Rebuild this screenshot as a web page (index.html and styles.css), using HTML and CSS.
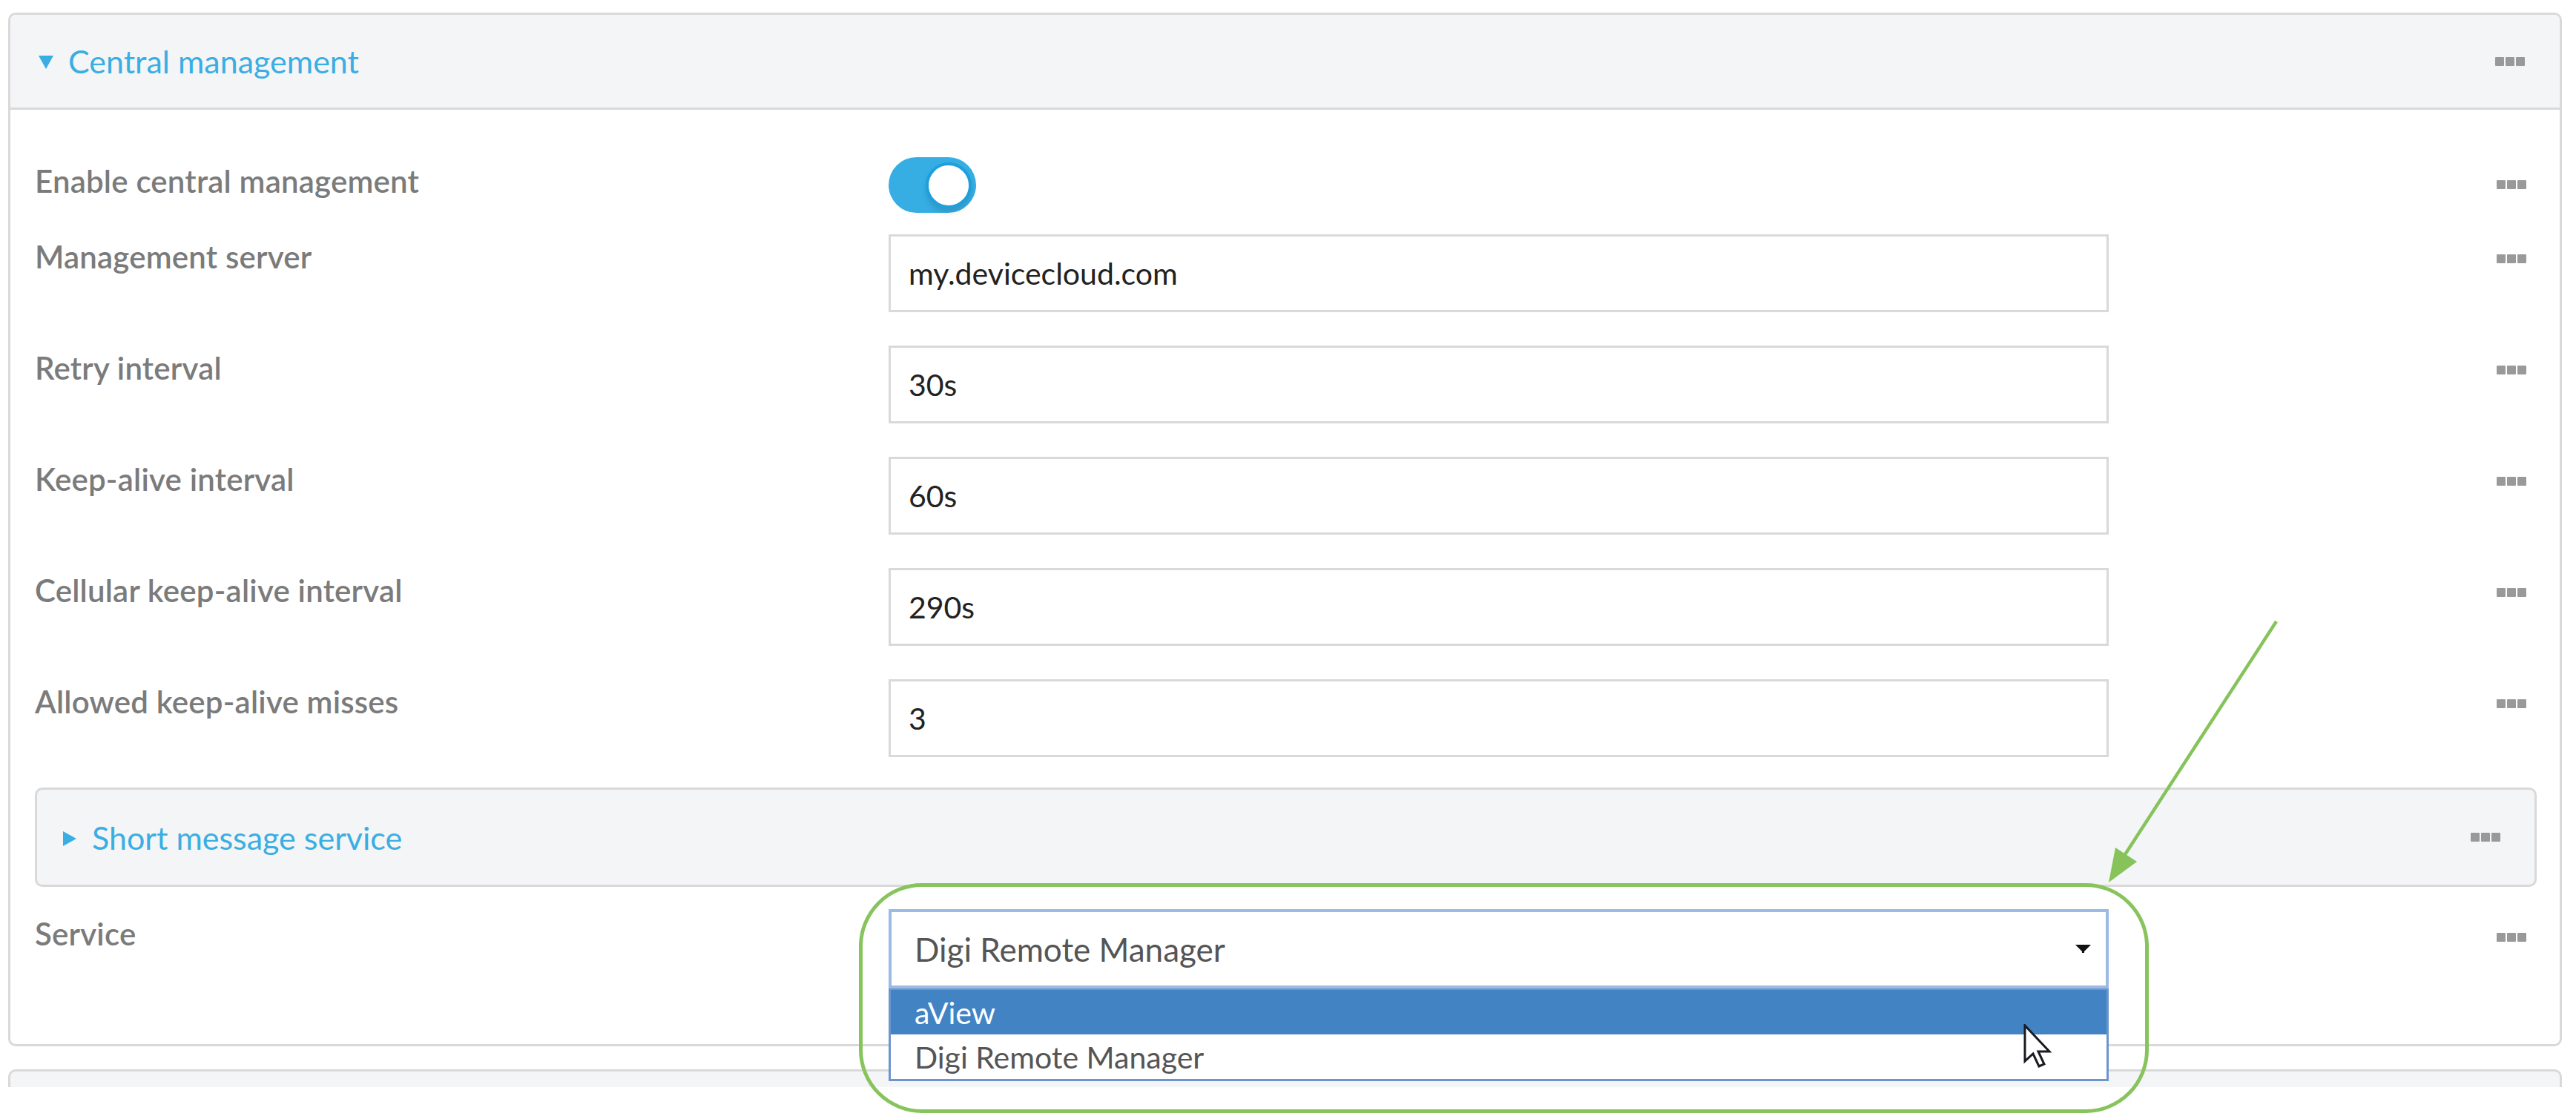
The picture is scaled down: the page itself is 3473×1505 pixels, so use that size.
FILE: index.html
```html
<!DOCTYPE html>
<html lang="en">
<head>
    <meta charset="UTF-8">
    <title>Central management</title>
    <link rel="stylesheet" href="styles.css">
</head>
<body>
<div class="page">
    <div class="panel">
        <div class="panel-head">
            <svg class="caret" width="20" height="18" viewBox="0 0 20 18"><polygon points="0,0 20,0 10,18" fill="#3aaee3"/></svg>
            <span class="panel-title">Central management</span>
            <span class="dots"><i></i><i></i><i></i></span>
        </div>
        <div class="panel-body">
            <div class="field field-toggle">
                <label>Enable central management</label>
                <div><span class="toggle"><span class="knob"></span></span></div>
                <span class="dots"><i></i><i></i><i></i></span>
            </div>
            <div class="field">
                <label>Management server</label>
                <div class="input">my.devicecloud.com</div>
                <span class="dots"><i></i><i></i><i></i></span>
            </div>
            <div class="field">
                <label>Retry interval</label>
                <div class="input">30s</div>
                <span class="dots"><i></i><i></i><i></i></span>
            </div>
            <div class="field">
                <label>Keep-alive interval</label>
                <div class="input">60s</div>
                <span class="dots"><i></i><i></i><i></i></span>
            </div>
            <div class="field">
                <label>Cellular keep-alive interval</label>
                <div class="input">290s</div>
                <span class="dots"><i></i><i></i><i></i></span>
            </div>
            <div class="field">
                <label>Allowed keep-alive misses</label>
                <div class="input">3</div>
                <span class="dots"><i></i><i></i><i></i></span>
            </div>

            <div class="subpanel">
                <svg class="caret-right" width="18" height="20" viewBox="0 0 18 20"><polygon points="0,0 18,10 0,20" fill="#3aaee3"/></svg>
                <span class="panel-title">Short message service</span>
                <span class="dots"><i></i><i></i><i></i></span>
            </div>

            <div class="field field-select">
                <label>Service</label>
                <div class="select-wrap">
                    <div class="select">
                        <span>Digi Remote Manager</span>
                        <svg width="21" height="11" viewBox="0 0 21 11"><polygon points="0,0 21,0 12,9 12,11 9,11 9,9" fill="#111"/></svg>
                    </div>
                    <div class="options">
                        <div class="option selected">aView</div>
                        <div class="option">Digi Remote Manager</div>
                        <svg class="cursor" width="38" height="60" viewBox="0 0 38 60"><path d="M2,2 L2,50 L13,40 L21,57 L28,54 L20,37 L35,37 Z" fill="#fff" stroke="#1a1a22" stroke-width="3" stroke-linejoin="miter"/></svg>
                    </div>
                    <div class="highlight"></div>
                </div>
                <span class="dots"><i></i><i></i><i></i></span>
            </div>
        </div>
    </div>
    <div class="panel panel-next"></div>

    <svg class="arrow" width="250" height="370" viewBox="0 0 250 370">
        <line x1="239" y1="8" x2="30" y2="330" stroke="#86c35a" stroke-width="4.5"/>
        <polygon points="13,360 22,313 51,332" fill="#86c35a"/>
    </svg>
</div>
</body>
</html>
```

FILE: styles.css
```css
body {
    margin: 0;
    background: #fff;
    font-family: Lato, "Open Sans", sans-serif;
}
.page {
    position: relative;
    min-height: 1505px;
    box-sizing: border-box;
    padding: 17px 19px 0 11px;
}
.panel {
    border: 3px solid #d9d9d9;
    border-radius: 10px;
    background: #fff;
}
.panel-head {
    height: 125px;
    display: flex;
    align-items: center;
    padding: 0 47px 0 38px;
    background: #f4f5f7;
    border-bottom: 3px solid #d9d9d9;
    border-radius: 8px 8px 0 0;
}
.caret {
    margin-right: 20px;
    margin-top: 3px;
}
.panel-title {
    color: #3aaee3;
    font-size: 43px;
    flex: 1;
}
.dots {
    display: flex;
    gap: 2px;
}
.dots i {
    width: 12px;
    height: 12px;
    background: #999;
    border-radius: 1px;
}
.panel-body {
    padding: 64px 45px 75px 33px;
}
.field {
    display: grid;
    grid-template-columns: 1151px 1645px 1fr;
    align-items: start;
    margin-bottom: 45px;
}
.field label {
    color: #7b7b7b;
    font-size: 42px;
    font-weight: 600;
    line-height: 48px;
    letter-spacing: 0.2px;
    padding-top: 6px;
}
.field .dots {
    justify-self: end;
    margin-top: 27px;
}
.field-toggle {
    margin-bottom: 29px;
}
.field-toggle label {
    padding-top: 8px;
}
.field-toggle .dots {
    margin-top: 31px;
}
.toggle {
    display: flex;
    justify-content: flex-end;
    align-items: center;
    width: 118px;
    height: 75px;
    padding: 0 6px;
    box-sizing: border-box;
    border-radius: 38px;
    background: #36aee4;
}
.knob {
    width: 62px;
    height: 62px;
    box-sizing: border-box;
    border-radius: 50%;
    background: #fff;
    border: 4px solid #1e9fdc;
    box-shadow: 0 6px 7px rgba(0, 0, 0, 0.12);
}
.input {
    height: 105px;
    box-sizing: border-box;
    border: 3px solid #d9d9d9;
    padding: 0 24px;
    display: flex;
    align-items: center;
    font-size: 41px;
    color: #222;
}
.subpanel {
    height: 134px;
    box-sizing: border-box;
    display: flex;
    align-items: center;
    margin: -4px -14px 30px 0;
    padding: 0 46px 0 35px;
    background: #f4f5f7;
    border: 3px solid #d9d9d9;
    border-radius: 10px;
}
.caret-right {
    margin-right: 21px;
    margin-top: 4px;
}
.field-select {
    margin-bottom: 0;
}
.field-select label {
    padding-top: 9px;
}
.field-select .dots {
    margin-top: 32px;
}
.select-wrap {
    position: relative;
}
.select {
    height: 107px;
    box-sizing: border-box;
    border: 4px solid #9bbbe4;
    padding: 0 20px 0 31px;
    display: flex;
    align-items: center;
    justify-content: space-between;
    font-size: 44px;
    color: #555;
}
.options {
    position: absolute;
    top: 100%;
    left: 0;
    right: 0;
    border: 3px solid #6c95cd;
    border-top: 2px solid #6c95cd;
    background: #fff;
    z-index: 2;
}
.option {
    height: 60px;
    display: flex;
    align-items: center;
    padding-left: 32px;
    font-size: 41px;
    color: #555;
}
.option.selected {
    background: #4283c4;
    color: #fff;
}
.cursor {
    position: absolute;
    left: 1527px;
    top: 46px;
}
.highlight {
    position: absolute;
    left: -40px;
    top: -35px;
    width: 1739px;
    height: 310px;
    box-sizing: border-box;
    border: 5px solid #88c45d;
    border-radius: 85px;
    z-index: 3;
}
.panel-next {
    margin-top: 31px;
    height: 21px;
    border-bottom: none;
    border-radius: 10px 10px 0 0;
    background: #f4f5f7;
}
.arrow {
    position: absolute;
    left: 2830px;
    top: 830px;
    z-index: 4;
}
```
